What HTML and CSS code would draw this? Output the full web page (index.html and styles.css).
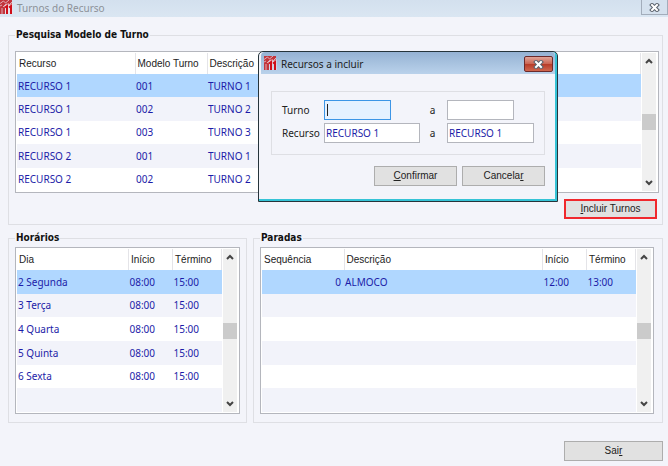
FILE: index.html
```html
<!DOCTYPE html>
<html lang="pt-BR">

<head>
    <meta charset="UTF-8">
    <meta name="viewport" content="width=device-width, initial-scale=1.0">
    <title>Turnos do Recurso</title>
    <link rel="stylesheet" href="styles.css">
</head>

<body>
    <svg class="symbols" width="0" height="0">
        <symbol id="logo" viewBox="0 0 13 14">
            <rect width="12" height="5" fill="#c2353c" />
            <rect y="5" width="5" height="9" fill="#c2353c" />
            <path d="M0 3.5L3.5 1l2 2L9 0M3 7l3-3 3 1 3-3M2 8v6M0 6l2-1" stroke="#e3bcc4" stroke-width=".9" fill="none" />
            <path d="M5 7.5l2-1.5V14M9 7.5L11 6v8" stroke="#f3dfe4" stroke-width="3" fill="none" />
            <path d="M5 7.5l2-1.5V14M9 7.5L11 6v8" stroke="#cf0f1a" stroke-width="2" fill="none" />
        </symbol>
        <symbol id="up" viewBox="0 0 8 6">
            <path d="M1 5l3-3 3 3" stroke="#444" stroke-width="2" fill="none" />
        </symbol>
        <symbol id="down" viewBox="0 0 8 6">
            <path d="M1 1l3 3 3-3" stroke="#444" stroke-width="2" fill="none" />
        </symbol>
        <symbol id="close" viewBox="0 0 11 9">
            <path d="M3 2l5 5m0-5L3 7" stroke="#5a626d" stroke-width="4" stroke-linecap="square" />
            <path d="M3 2l5 5m0-5L3 7" stroke="#fff" stroke-width="2" stroke-linecap="square" />
        </symbol>
    </svg>

    <header class="titlebar">
        <svg class="logo"><use href="#logo" /></svg>
        <h1>Turnos do Recurso</h1>
        <button class="close" aria-label="Fechar"><svg><use href="#close" /></svg></button>
    </header>

    <main>
        <fieldset class="group pesquisa">
            <legend>Pesquisa Modelo de Turno</legend>
            <div class="grid">
                <table>
                    <colgroup>
                        <col class="col-recurso">
                        <col class="col-modelo">
                        <col>
                    </colgroup>
                    <thead>
                        <tr><th>Recurso</th><th>Modelo Turno</th><th>Descrição</th></tr>
                    </thead>
                    <tbody>
                        <tr class="selected"><td>RECURSO 1</td><td>001</td><td>TURNO 1</td></tr>
                        <tr><td>RECURSO 1</td><td>002</td><td>TURNO 2</td></tr>
                        <tr><td>RECURSO 1</td><td>003</td><td>TURNO 3</td></tr>
                        <tr><td>RECURSO 2</td><td>001</td><td>TURNO 1</td></tr>
                        <tr><td>RECURSO 2</td><td>002</td><td>TURNO 2</td></tr>
                    </tbody>
                </table>
                <div class="scrollbar">
                    <button aria-label="Subir"><svg><use href="#up" /></svg></button>
                    <span class="thumb"></span>
                    <button aria-label="Descer"><svg><use href="#down" /></svg></button>
                </div>
            </div>
            <div class="actions">
                <button class="btn highlight"><u>I</u>ncluir Turnos</button>
            </div>
        </fieldset>

        <div class="details">
            <fieldset class="group horarios">
                <legend>Horários</legend>
                <div class="grid">
                    <table>
                        <colgroup>
                            <col>
                            <col class="col-inicio">
                            <col class="col-termino">
                        </colgroup>
                        <thead>
                            <tr><th>Dia</th><th>Início</th><th>Término</th></tr>
                        </thead>
                        <tbody>
                            <tr class="selected"><td>2 Segunda</td><td>08:00</td><td>15:00</td></tr>
                            <tr><td>3 Terça</td><td>08:00</td><td>15:00</td></tr>
                            <tr><td>4 Quarta</td><td>08:00</td><td>15:00</td></tr>
                            <tr><td>5 Quinta</td><td>08:00</td><td>15:00</td></tr>
                            <tr><td>6 Sexta</td><td>08:00</td><td>15:00</td></tr>
                            <tr><td></td><td></td><td></td></tr>
                        </tbody>
                    </table>
                    <div class="scrollbar">
                        <button aria-label="Subir"><svg><use href="#up" /></svg></button>
                        <span class="thumb"></span>
                        <button aria-label="Descer"><svg><use href="#down" /></svg></button>
                    </div>
                </div>
            </fieldset>

            <fieldset class="group paradas">
                <legend>Paradas</legend>
                <div class="grid">
                    <table>
                        <colgroup>
                            <col class="col-sequencia">
                            <col>
                            <col class="col-inicio">
                            <col class="col-termino">
                        </colgroup>
                        <thead>
                            <tr><th>Sequência</th><th>Descrição</th><th>Início</th><th>Término</th></tr>
                        </thead>
                        <tbody>
                            <tr class="selected"><td class="num">0</td><td>ALMOCO</td><td>12:00</td><td>13:00</td></tr>
                            <tr><td></td><td></td><td></td><td></td></tr>
                            <tr><td></td><td></td><td></td><td></td></tr>
                            <tr><td></td><td></td><td></td><td></td></tr>
                            <tr><td></td><td></td><td></td><td></td></tr>
                            <tr><td></td><td></td><td></td><td></td></tr>
                        </tbody>
                    </table>
                    <div class="scrollbar">
                        <button aria-label="Subir"><svg><use href="#up" /></svg></button>
                        <span class="thumb"></span>
                        <button aria-label="Descer"><svg><use href="#down" /></svg></button>
                    </div>
                </div>
            </fieldset>
        </div>

        <footer class="actions">
            <button class="btn sair">Sai<u>r</u></button>
        </footer>
    </main>

    <div class="dialog" role="dialog" aria-labelledby="dialogTitle">
        <div class="dialog-title">
            <svg class="logo"><use href="#logo" /></svg>
            <h2 id="dialogTitle">Recursos a incluir</h2>
            <button class="close" aria-label="Fechar"><svg><use href="#close" /></svg></button>
        </div>
        <form>
            <div class="fields">
                <label for="turnoDe">Turno</label>
                <input type="text" id="turnoDe" class="short active">
                <label for="turnoAte">a</label>
                <input type="text" id="turnoAte" class="short">
                <label for="recursoDe">Recurso</label>
                <input type="text" id="recursoDe" value="RECURSO 1">
                <label for="recursoAte">a</label>
                <input type="text" id="recursoAte" class="medium" value="RECURSO 1">
            </div>
            <div class="actions">
                <button type="button" class="btn"><u>C</u>onfirmar</button>
                <button type="button" class="btn">Cancela<u>r</u></button>
            </div>
        </form>
    </div>
</body>

</html>
```
FILE: styles.css
```css
* {
    margin: 0;
    padding: 0;
    box-sizing: border-box;
}

body {
    min-height: 100vh;
    background: #f3f4fa;
    font-family: "Noto Sans", sans-serif;
    font-size: 10px;
    color: #222;
}

button,
input {
    font: inherit;
    color: inherit;
}

.symbols {
    display: none;
}

.titlebar {
    display: flex;
    height: 17px;
    background: linear-gradient(#d3e0ee, #dae6f2);
}

.logo {
    width: 13px;
    height: 14px;
    flex: none;
}

.titlebar h1,
.dialog h2 {
    margin-left: 4px;
    flex: 1;
    font-size: 10px;
    line-height: 16px;
    font-weight: normal;
}

.titlebar h1 {
    color: #8d9299;
}

.close {
    display: flex;
    align-items: center;
    justify-content: center;
}

.close svg {
    width: 11px;
    height: 9px;
}

.titlebar .close {
    width: 27px;
    height: 15px;
    border: 1px solid #a3adbb;
    border-top: none;
    background: #d5e1ee;
}

main {
    padding: 11px 5px 5px 8px;
}

.group {
    min-width: 0;
    border: 1px solid #dedfe4;
    padding: 0 3px 5px 6px;
}

legend {
    height: 14px;
    padding: 0 1px;
    font-family: "DejaVu Sans Condensed", "DejaVu Sans", sans-serif;
    font-stretch: condensed;
    font-size: 10px;
    line-height: 14px;
    font-weight: bold;
    color: #111;
}

.grid {
    display: flex;
    border: 1px solid #b4b6bd;
    background: #fff;
    padding: 1px 2px 1px 1px;
}

.pesquisa .grid {
    height: 142px;
    margin-top: 9px;
}

table {
    flex: 1;
    min-width: 0;
    height: 100%;
    table-layout: fixed;
    border-collapse: collapse;
}

th {
    height: 21px;
    border-right: 1px solid #e4e4e8;
    padding-left: 2px;
    font-family: "Liberation Sans", sans-serif;
    font-size: 10px;
    line-height: 14px;
    font-weight: normal;
    text-align: left;
    white-space: nowrap;
}

td {
    height: 23px;
    line-height: 14px;
    padding-left: 1px;
    color: #1c1ca8;
    white-space: nowrap;
}

tbody tr:nth-child(even) {
    background: #f2f3fa;
}

tbody tr.selected {
    background: #b0d7ff;
}

td.num {
    padding-right: 3px;
    text-align: right;
}

.col-recurso {
    width: 118px;
}

.col-modelo {
    width: 72px;
}

.col-inicio {
    width: 44px;
}

.col-termino {
    width: 49px;
}

.col-sequencia {
    width: 82px;
}

.scrollbar {
    display: flex;
    flex-direction: column;
    justify-content: space-between;
    width: 14px;
    margin-left: 1px;
    background: #f0f0f0;
}

.scrollbar button {
    display: flex;
    align-items: center;
    justify-content: center;
    height: 16px;
    border: none;
    background: none;
}

.scrollbar svg {
    width: 8px;
    height: 6px;
}

.thumb {
    height: 16px;
    background: #cbcbcb;
}

.actions {
    display: flex;
    justify-content: flex-end;
    gap: 5px;
}

.btn {
    width: 83px;
    height: 20px;
    border: 1px solid #adadad;
    background: #e1e1e1;
    font-family: "Liberation Sans", sans-serif;
    font-size: 10px;
    line-height: 14px;
}

.pesquisa .actions {
    margin-top: 6px;
    padding-right: 2px;
}

.btn.highlight {
    width: 93px;
    border: 2px solid #f0282d;
}

.details {
    display: grid;
    grid-template-columns: 239fr 410fr;
    gap: 6px;
    margin-top: 6px;
}

.details .grid {
    height: 167px;
    margin-top: 2px;
}

.horarios,
.paradas {
    padding-bottom: 8px;
}

.horarios {
    padding-right: 6px;
}

.paradas {
    padding-right: 8px;
}

.sair {
    width: 99px;
}

footer.actions {
    margin-top: 18px;
}

.dialog {
    position: absolute;
    left: 258px;
    top: 51px;
    width: 300px;
    border: 1px solid #26343b;
    border-radius: 5px 5px 0 0;
    box-shadow: inset -1px -1px 0 1px #35c3d6;
    background: #f3f4fa;
}

.dialog-title {
    display: flex;
    margin: 0 2px;
    padding: 4px 2px 0 3px;
    height: 22px;
    border-radius: 4px 4px 0 0;
    background: linear-gradient(#95b2d3, #bad2eb);
}

.dialog .close {
    width: 29px;
    height: 16px;
    border: 1px solid #6b2a2b;
    border-radius: 2px;
    background: linear-gradient(#e0a498, #cb6553 48%, #b63a27 50%, #d0664e);
}

.dialog form {
    padding: 17px 12px 15px;
}

.fields {
    display: grid;
    grid-template-columns: 42px 96px 27px 1fr;
    align-items: center;
    row-gap: 3px;
    border: 1px solid #dedfe4;
    padding: 8px 11px 11px 10px;
}

.fields label:nth-of-type(even) {
    padding-right: 2px;
    text-align: center;
}

input {
    width: 100%;
    height: 20px;
    border: 1px solid #b4b6bd;
    padding: 0 1px;
    background: #fff;
    color: #1c1ca8;
}

input.short {
    width: 67px;
}

input.medium {
    width: 87px;
}

input.active {
    border-color: #3c95e6;
    background: linear-gradient(#222, #222) 2px 3px / 1px 12px no-repeat #e5f1ff;
}

.dialog .actions {
    margin-top: 11px;
}
```
